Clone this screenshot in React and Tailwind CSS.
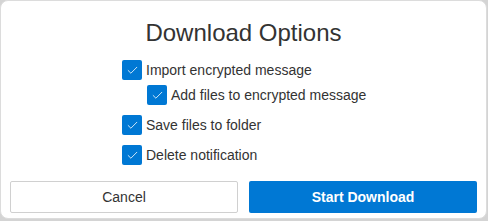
import { Check } from 'lucide-react'

const options = [
  { label: 'Import encrypted message', indent: false, gap: 'mt-0' },
  { label: 'Add files to encrypted message', indent: true, gap: 'mt-[5px]' },
  { label: 'Save files to folder', indent: false, gap: 'mt-[10px]' },
  { label: 'Delete notification', indent: false, gap: 'mt-[10px]' },
]

function CheckRow({ label, indent, gap }) {
  return (
    <label className={`flex items-center gap-[4px] ${indent ? 'pl-[25px]' : ''} ${gap}`}>
      <span className="w-5 h-5 rounded-[2px] bg-[#0078d4] flex items-center justify-center shrink-0">
        <Check className="w-[13px] h-[13px] text-white" strokeWidth={1.5} />
      </span>
      <span className="text-[14px] text-[#333] leading-5">{label}</span>
    </label>
  )
}

export default function App() {
  return (
    <div className="w-[488px] h-[221px] bg-[#d4d4d4] font-['Liberation_Sans',Arial,sans-serif]">
      <div className="w-[487px] h-[219px] bg-white border border-[#dcdcdc] rounded-[8px] flex flex-col">
        <h1 className="text-[24px] text-[#333] text-center mt-[19px] leading-[26px]">Download Options</h1>
        <div className="mt-[14px] pl-[121px]">
          {options.map(o => <CheckRow key={o.label} {...o} />)}
        </div>
        <div className="flex gap-[11px] px-[9px] mt-[16px]">
          <button className="w-[229px] h-[32px] border border-[#d0d0d0] rounded-[2px] text-[14px] text-[#333] bg-white">Cancel</button>
          <button className="w-[229px] h-[32px] rounded-[2px] text-[14px] font-bold text-white bg-[#0078d4]">Start Download</button>
        </div>
      </div>
    </div>
  )
}
